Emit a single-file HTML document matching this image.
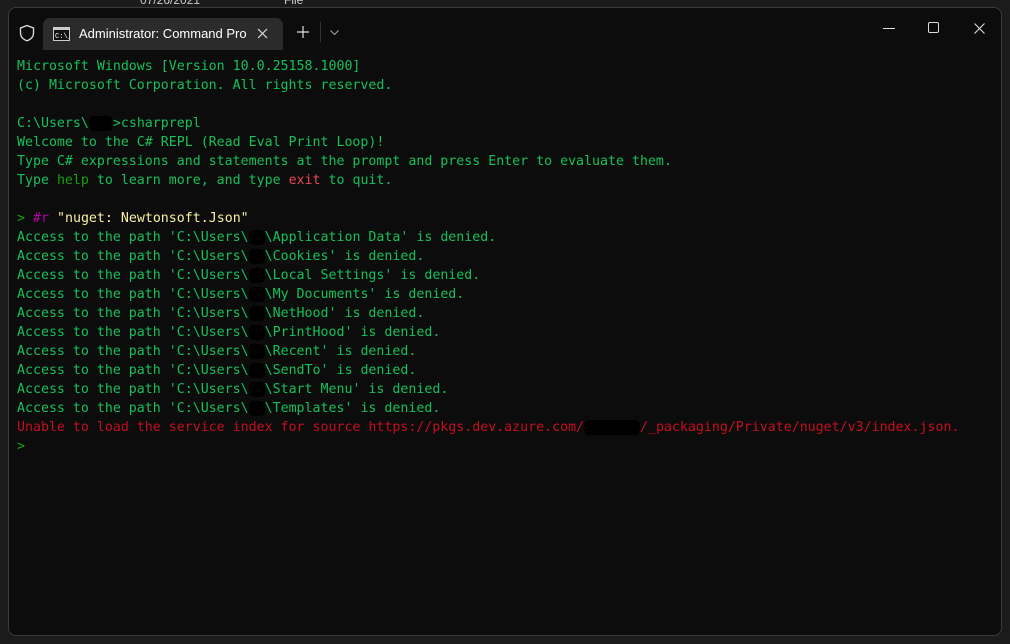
<!DOCTYPE html>
<html><head><style>
body{margin:0;width:1010px;height:644px;background:#1b1b1b;overflow:hidden;position:relative;font-family:"Liberation Sans",sans-serif}
.top{position:absolute;left:0;top:-7px;color:#ccc;font-size:12px}
.win{position:absolute;left:8px;top:7px;width:992px;height:627px;background:#0c0c0c;border:1px solid #3a3a3a;border-radius:8px;overflow:hidden}
.tab{position:absolute;left:34px;top:10px;width:240px;height:32px;background:#2b2b2b;border-radius:7px 7px 0 0}
.term{position:absolute;left:8px;top:49px;font-family:"DejaVu Sans Mono",monospace;font-size:13.28px;line-height:19px;color:#16c05a;white-space:pre}
.g{color:#13a10e}
.r{color:#c50f1f}
.m{color:#b4009e}
.y{color:#f9f1a5}
.b{background:#000;color:#000;border-radius:5px}
</style></head><body>
<div class="top"><span style="position:absolute;left:140px">07/26/2021 18:19</span><span style="position:absolute;left:284px">File folder</span></div>
<div class="win">
<svg style="position:absolute;left:10px;top:16px" width="16" height="18" viewBox="0 0 16 18"><path d="M8 1.5 L14.5 4 V9 C14.5 13 11.5 15.5 8 16.8 C4.5 15.5 1.5 13 1.5 9 V4 Z" fill="none" stroke="#ddd" stroke-width="1.3"/></svg>
<div class="tab">
<svg style="position:absolute;left:10px;top:9px" width="17" height="14"><rect x="0.5" y="0.5" width="16" height="13" fill="#111" stroke="#ccc"/><rect x="1" y="1" width="15" height="2" fill="#ccc"/><text x="2" y="11" font-size="7" fill="#fff" font-family="Liberation Mono">C:\_</text></svg>
<span style="position:absolute;left:36px;top:8px;color:#fff;font-size:13px">Administrator: Command Pro</span>
<svg style="position:absolute;left:214px;top:10px" width="11" height="11"><path d="M1 1L10 10M10 1L1 10" stroke="#ddd" stroke-width="1.2"/></svg>
</div>
<svg style="position:absolute;left:288px;top:18px" width="12" height="12"><path d="M6 0V12M0 6H12" stroke="#ddd" stroke-width="1.2"/></svg>
<div style="position:absolute;left:311px;top:14px;width:1px;height:20px;background:#333"></div>
<svg style="position:absolute;left:321px;top:22px" width="9" height="5"><path d="M0.5 0.5L4.5 4.5L8.5 0.5" stroke="#aaa" fill="none"/></svg>
<div style="position:absolute;left:874px;top:20px;width:12px;height:1px;background:#ddd"></div>
<div style="position:absolute;left:919px;top:14px;width:9px;height:9px;border:1px solid #ddd;border-radius:2px"></div>
<svg style="position:absolute;left:965px;top:15px" width="11" height="11"><path d="M0.5 0.5L10.5 10.5M10.5 0.5L0.5 10.5" stroke="#ddd" stroke-width="1.1"/></svg>
<div class="term">Microsoft Windows [Version 10.0.25158.1000]
(c) Microsoft Corporation. All rights reserved.

C:\Users\<span class="b">\us</span>>csharprepl
Welcome to the C# REPL (Read Eval Print Loop)!
Type C# expressions and statements at the prompt and press Enter to evaluate them.
Type <span class="g">help</span> to learn more, and type <span style="color:#e74856">exit</span> to quit.

<span class="g">&gt;</span> <span class="m">#r</span> <span class="y">"nuget: Newtonsoft.Json"</span>
Access to the path 'C:\Users\<span class="b">uu</span>\Application Data' is denied.
Access to the path 'C:\Users\<span class="b">uu</span>\Cookies' is denied.
Access to the path 'C:\Users\<span class="b">uu</span>\Local Settings' is denied.
Access to the path 'C:\Users\<span class="b">uu</span>\My Documents' is denied.
Access to the path 'C:\Users\<span class="b">uu</span>\NetHood' is denied.
Access to the path 'C:\Users\<span class="b">uu</span>\PrintHood' is denied.
Access to the path 'C:\Users\<span class="b">uu</span>\Recent' is denied.
Access to the path 'C:\Users\<span class="b">uu</span>\SendTo' is denied.
Access to the path 'C:\Users\<span class="b">uu</span>\Start Menu' is denied.
Access to the path 'C:\Users\<span class="b">uu</span>\Templates' is denied.
<span class="r">Unable to load the service index for source https://pkgs.dev.azure.com/<span class="b">xxxxxxx</span>/_packaging/Private/nuget/v3/index.json.</span>
<span class="g">&gt;</span></div>
</div>
</body></html>
